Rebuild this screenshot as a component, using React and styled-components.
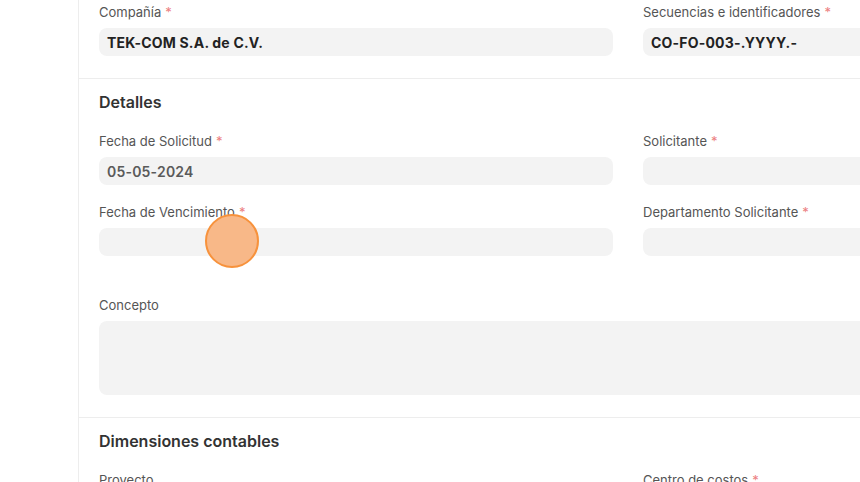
import React from "react";
import styled, { createGlobalStyle } from "styled-components";

const GlobalStyle = createGlobalStyle`
  html, body {
    margin: 0;
    padding: 0;
    background: #ffffff;
    overflow: hidden;
  }
  body {
    font-family: Inter, "Noto Sans", sans-serif;
    -webkit-font-smoothing: antialiased;
  }
`;

const Page = styled.div`
  display: flex;
  width: 860px;
  height: 482px;
  overflow: hidden;
  position: relative;
`;

const Sidebar = styled.div`
  flex: 0 0 78px;
  border-right: 1px solid #ededed;
`;

const Main = styled.div`
  flex: 1;
  min-width: 0;
`;

const Section = styled.div`
  padding: ${(p) => p.$pad || "15px 20px 22px"};
  border-bottom: ${(p) => (p.$last ? "none" : "1px solid #ededed")};
`;

const Heading = styled.div`
  font-size: 16px;
  line-height: 16px;
  font-weight: 600;
  color: #333333;
  margin-bottom: 23px;
`;

const Grid = styled.div`
  display: grid;
  grid-template-columns: 514px 514px;
  column-gap: 30px;
  row-gap: 19px;
  margin-top: ${(p) => p.$top || 0}px;
`;

const Field = styled.div`
  display: flex;
  flex-direction: column;
  grid-column: ${(p) => (p.$wide ? "1 / span 2" : "auto")};
`;

const Label = styled.label`
  font-size: 13px;
  line-height: 16px;
  color: #555555;
  margin-bottom: 8px;
  white-space: nowrap;
`;

const Req = styled.span`
  color: #ec8080;
  margin-left: 4px;
`;

const Input = styled.div`
  height: ${(p) => p.$h || 28}px;
  border-radius: 8px;
  background: #f3f3f3;
  padding: 0 8px;
  display: flex;
  align-items: center;
  font-size: 14px;
  font-weight: ${(p) => (p.$muted ? 600 : 700)};
  color: ${(p) => (p.$muted ? "#5a5a5a" : "#222222")};
  letter-spacing: 0.2px;
`;

const Cursor = styled.div`
  position: absolute;
  left: 205px;
  top: 214px;
  width: 50px;
  height: 50px;
  border-radius: 50%;
  background: #f8b888;
  border: 2px solid #f7923c;
  pointer-events: none;
`;

const FormField = ({ label, required, value, muted, h, wide }) => (
  <Field $wide={wide}>
    <Label>
      {label}
      {required && <Req>*</Req>}
    </Label>
    <Input $muted={muted} $h={h}>
      {value}
    </Input>
  </Field>
);

export default function App() {
  return (
    <>
      <GlobalStyle />
      <Page>
        <Sidebar />
        <Main>
          <Section $pad="4px 20px 22px">
            <Grid>
              <FormField label="Compañía" required value="TEK-COM S.A. de C.V." />
              <FormField label="Secuencias e identificadores" required value="CO-FO-003-.YYYY.-" />
            </Grid>
          </Section>
          <Section $pad="15px 20px 22px">
            <Heading>Detalles</Heading>
            <Grid>
              <FormField label="Fecha de Solicitud" required value="05-05-2024" muted />
              <FormField label="Solicitante" required />
              <FormField label="Fecha de Vencimiento" required />
              <FormField label="Departamento Solicitante" required />
            </Grid>
            <Grid $top={41}>
              <FormField label="Concepto" h={74} wide />
            </Grid>
          </Section>
          <Section $pad="15px 20px 0" $last>
            <Heading>Dimensiones contables</Heading>
            <Grid>
              <FormField label="Proyecto" />
              <FormField label="Centro de costos" required />
            </Grid>
          </Section>
        </Main>
        <Cursor />
      </Page>
    </>
  );
}
